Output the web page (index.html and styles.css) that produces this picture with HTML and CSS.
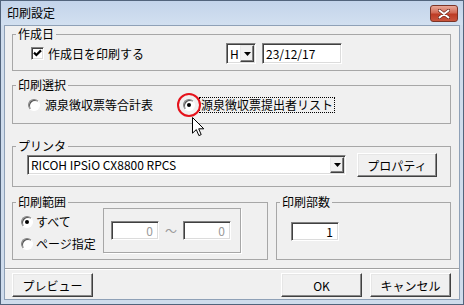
FILE: index.html
```html
<!DOCTYPE html>
<html lang="ja">
<head>
    <meta charset="UTF-8">
    <title>印刷設定</title>
    <link rel="stylesheet" href="styles.css">
</head>
<body>
<div class="window">
    <div class="titlebar">
        <span class="title">印刷設定</span>
        <span class="close">
            <svg width="12" height="10" viewBox="0 0 12 10">
                <path d="M1.5 1.5 L10.5 8.5 M10.5 1.5 L1.5 8.5" stroke="#6b2b1f" stroke-width="3.4" stroke-linecap="round"/>
                <path d="M1.5 1.5 L10.5 8.5 M10.5 1.5 L1.5 8.5" stroke="#fff" stroke-width="1.9" stroke-linecap="round"/>
            </svg>
        </span>
    </div>
    <div class="client">
        <!-- 作成日 -->
        <fieldset class="group g-date">
            <legend>作成日</legend>
            <div class="date-row">
                <span class="check">
                    <svg width="9" height="9" viewBox="0 0 9 9">
                        <path d="M1 3.6 L3.4 6 L8 1.4" fill="none" stroke="#000" stroke-width="2.2"/>
                    </svg>
                </span>
                <span class="label">作成日を印刷する</span>
                <div class="date-fields">
                    <div class="combo era">
                        <span class="combo-text">H</span>
                        <span class="drop"><svg width="7" height="4" viewBox="0 0 7 4"><path d="M0 0 H7 L3.5 4 Z"/></svg></span>
                    </div>
                    <div class="field date">23/12/17</div>
                </div>
            </div>
        </fieldset>

        <!-- 印刷選択 -->
        <fieldset class="group g-select">
            <legend>印刷選択</legend>
            <div class="select-row">
                <span class="radio"></span>
                <span class="label">源泉徴収票等合計表</span>
                <span class="radio checked marked">
                    <span class="ring"></span>
                    <svg class="cursor" width="13" height="20" viewBox="0 0 13 20">
                        <path d="M0.5 0.5 V16.2 L4.3 12.6 L6.9 18.6 L9.2 17.6 L6.7 11.8 H11.8 Z" fill="#fff" stroke="#000"/>
                    </svg>
                </span>
                <span class="label focus">源泉徴収票提出者リスト</span>
            </div>
        </fieldset>

        <!-- プリンタ -->
        <fieldset class="group g-printer">
            <legend>プリンタ</legend>
            <div class="printer-row">
                <div class="combo printer">
                    <span class="combo-text">RICOH IPSiO CX8800 RPCS</span>
                    <span class="drop"><svg width="7" height="4" viewBox="0 0 7 4"><path d="M0 0 H7 L3.5 4 Z"/></svg></span>
                </div>
                <button class="btn prop">プロパティ</button>
            </div>
        </fieldset>

        <div class="groups-row">
            <!-- 印刷範囲 -->
            <fieldset class="group g-range">
                <legend>印刷範囲</legend>
                <div class="range-body">
                    <div class="range-opts">
                        <div class="opt"><span class="radio checked"></span><span class="label">すべて</span></div>
                        <div class="opt"><span class="radio"></span><span class="label">ページ指定</span></div>
                    </div>
                    <div class="pages">
                        <div class="field num disabled">0</div>
                        <span class="tilde">～</span>
                        <div class="field num disabled">0</div>
                    </div>
                </div>
            </fieldset>

            <!-- 印刷部数 -->
            <fieldset class="group g-copies">
                <legend>印刷部数</legend>
                <div class="copies-body">
                    <div class="field num">1</div>
                </div>
            </fieldset>
        </div>

        <div class="sep"></div>

        <div class="buttons">
            <button class="btn">プレビュー</button>
            <span class="spacer"></span>
            <button class="btn">OK</button>
            <button class="btn">キャンセル</button>
        </div>
    </div>
</div>
</body>
</html>
```

FILE: styles.css
```css
*{
    box-sizing: border-box;
}
body{
    margin: 0;
    font-family: "Noto Sans CJK JP", sans-serif;
    font-size: 12px;
    color: #000;
    background: #fff;
}
.window{
    position: relative;
    width: 464px;
    height: 305px;
    border: 1px solid #52647c;
    background: #cfdcec;
}
/* title bar */
.titlebar{
    height: 24px;
    display: flex;
    justify-content: space-between;
    align-items: flex-start;
    padding: 0 5px 0 6px;
    background: linear-gradient(#c3d4ea, #d2e0f0);
}
.title{
    line-height: 24px;
}
.close{
    margin-top: 4px;
    width: 28px;
    height: 17px;
    display: flex;
    align-items: center;
    justify-content: center;
    border: 1px solid #7b3427;
    border-radius: 3px;
    background: linear-gradient(#e9a999, #d26a55 45%, #bd3c25 55%, #c9553d);
}
/* client area */
.client{
    margin: 0 3px;
    height: 275px;
    border: 1px solid #8fa1b7;
    background: #f0f0f0;
    padding: 0 8px 0 7px;
}
.group{
    margin: 0;
    padding: 0;
    min-width: 0;
    border: 1px solid #a7a7a7;
}
.group legend{
    margin-left: 3px;
    padding: 0 2px;
    height: 14px;
    line-height: 14px;
}
.label{
    line-height: 14px;
    white-space: nowrap;
}
/* controls */
.field{
    background: #fff;
    border: 1px solid;
    border-color: #828282 #fff #fff #828282;
    box-shadow: inset 1px 1px #404040, inset -1px -1px #dcdcdc;
    line-height: 16px;
    padding: 1px 3px 0;
    white-space: nowrap;
}
.field.num{
    width: 48px;
    height: 19px;
    text-align: right;
    padding-right: 5px;
}
.field.disabled{
    color: #9a9a9a;
}
.check{
    width: 13px;
    height: 13px;
    display: flex;
    align-items: center;
    justify-content: center;
    background: #fff;
    border: 1px solid;
    border-color: #828282 #fff #fff #828282;
    box-shadow: inset 1px 1px #404040, inset -1px -1px #dcdcdc;
}
.radio{
    position: relative;
    width: 12px;
    height: 12px;
    flex: none;
    border-radius: 50%;
    background: #fff;
    border: 1px solid;
    border-color: #828282 #fff #fff #828282;
    box-shadow: inset 1px 1px #555;
}
.radio.checked::after{
    content: "";
    position: absolute;
    left: 3px;
    top: 3px;
    width: 4px;
    height: 4px;
    border-radius: 50%;
    background: #000;
}
.combo{
    display: flex;
    align-items: stretch;
    background: #fff;
    border: 1px solid;
    border-color: #828282 #fff #fff #828282;
    box-shadow: inset 1px 1px #404040, inset -1px -1px #dcdcdc;
    padding: 1px;
}
.combo-text{
    flex: 1;
    line-height: 17px;
    padding-left: 2px;
    white-space: nowrap;
}
.drop{
    width: 14px;
    display: flex;
    align-items: center;
    justify-content: center;
    background: #f0f0f0;
    border: 1px solid;
    border-color: #e8e8e8 #404040 #404040 #e8e8e8;
    box-shadow: inset -1px -1px #828282;
}
.btn{
    font: inherit;
    color: #000;
    padding: 0;
    background: #f0f0f0;
    border: 1px solid;
    border-color: #fff #404040 #404040 #fff;
    box-shadow: inset -1px -1px #8a8a8a, inset 1px 1px #e6e6e6;
}
/* 作成日 */
.g-date{
    margin-top: 1px;
    height: 44px;
}
.date-row{
    display: flex;
    align-items: center;
    height: 21px;
    margin-top: 2px;
    padding-left: 18px;
}
.date-row .label{
    margin-left: 4px;
}
.date-fields{
    display: flex;
    gap: 6px;
    margin-left: auto;
    margin-right: 108px;
}
.combo.era{
    width: 30px;
    height: 21px;
}
.field.date{
    width: 80px;
    height: 21px;
    line-height: 18px;
}
/* 印刷選択 */
.g-select{
    margin-top: 7px;
    height: 46px;
}
.select-row{
    display: flex;
    align-items: center;
    height: 16px;
    margin-top: 5px;
    padding-left: 15px;
}
.select-row .label{
    margin-left: 5px;
}
.select-row .marked{
    margin-left: 30px;
}
.select-row .focus{
    margin-left: 4px;
    padding: 0 1px;
    border: 1px dotted #000;
    line-height: 14px;
}
.ring{
    position: absolute;
    left: -7px;
    top: -7px;
    width: 24px;
    height: 24px;
    border: 2px solid #e5121b;
    border-radius: 50%;
}
.cursor{
    position: absolute;
    left: 8px;
    top: 17px;
}
/* プリンタ */
.g-printer{
    margin-top: 15px;
    height: 48px;
}
.printer-row{
    display: flex;
    align-items: center;
    height: 24px;
    padding-left: 14px;
}
.combo.printer{
    width: 319px;
    height: 20px;
}
.combo.printer .combo-text{
    line-height: 16px;
}
.btn.prop{
    margin-left: 11px;
    width: 80px;
    height: 24px;
}
/* 印刷範囲・印刷部数 */
.groups-row{
    display: flex;
    gap: 8px;
    margin-top: 8px;
}
.g-range{
    width: 256px;
    height: 65px;
}
.g-copies{
    width: 175px;
    height: 65px;
}
.range-body{
    display: flex;
}
.range-opts{
    width: 90px;
    padding: 5px 0 0 8px;
    display: flex;
    flex-direction: column;
    gap: 6px;
}
.opt{
    display: flex;
    align-items: center;
    height: 16px;
}
.opt .label{
    margin-left: 3px;
}
.pages{
    margin-top: -1px;
    width: 138px;
    height: 45px;
    display: flex;
    align-items: center;
    padding-left: 7px;
    border: 1px solid #a7a7a7;
    box-shadow: 1px 1px #fff;
}
.tilde{
    width: 24px;
    text-align: center;
    color: #9a9a9a;
}
.copies-body{
    padding: 13px 0 0 14px;
}
/* bottom */
.sep{
    margin: 8px -8px 0 -7px;
    border-top: 1px solid #a0a0a0;
    border-bottom: 1px solid #fff;
}
.buttons{
    display: flex;
    gap: 8px;
    margin-top: 3px;
}
.buttons .btn{
    width: 81px;
    height: 24px;
}
.spacer{
    flex: 1;
}
```
